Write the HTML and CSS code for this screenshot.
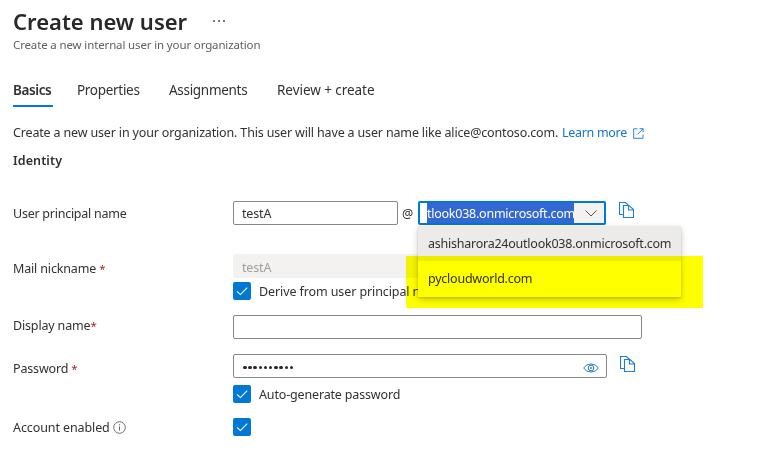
FILE: index.html
```html
<!DOCTYPE html>
<html lang="en">
<head>
<meta charset="utf-8">
<title>Create new user</title>
<link rel="stylesheet" href="styles.css">
</head>
<body>
<svg class="defs" width="0" height="0" aria-hidden="true">
  <symbol id="check" viewBox="0 0 18 18"><path d="M4 9.3l3.400 3.300 6.800-6.900" fill="none" stroke="#fff" stroke-width="1.1"/></symbol>
  <symbol id="copy" viewBox="0 0 16 17"><path d="M4.500 12.500h-4V.5h6l3 3M4.500 3.500h5.500l4.500 4v8h-10zM9.500 3.500v4.500h5" fill="none" stroke="#1a7fd6" stroke-width="1.1"/></symbol>
</svg>
<main class="page">
  <header class="head">
    <h1 class="title">Create new user</h1>
    <span class="more"><i></i><i></i><i></i></span>
  </header>
  <p class="subtitle">Create a new internal user in your organization</p>
  <nav class="tabs">
    <a class="tab active">Basics</a>
    <a class="tab t2">Properties</a>
    <a class="tab t3">Assignments</a>
    <a class="tab t4">Review + create</a>
  </nav>
  <div class="intro">
    <span class="intro-text">Create a new user in your organization. This user will have a user name like alice@contoso.com.</span>
    <a class="learn">Learn more</a>
    <svg class="external" width="11" height="11" viewBox="0 0 11 11"><path d="M4.500.8H.700v9.500h9.300V6.500M6.500.7h3.600v3.600M10 .8L4.500 6.300" fill="none" stroke="#2d83d6"/></svg>
  </div>
  <h2 class="section">Identity</h2>
  <form class="form">
    <div class="row upn">
      <label class="label l-upn">User principal name</label>
      <div class="box name-box"><span>testA</span></div>
      <span class="at">@</span>
      <div class="combo">
        <div class="combo-value"><span>tlook038.onmicrosoft.com</span></div>
        <div class="combo-arrow"><svg width="12" height="7" viewBox="0 0 12 7"><path d="M.5.5L6 6 11.500.5" fill="none" stroke="#555"/></svg></div>
        <div class="menu">
          <div class="option selected"><span class="o1">ashisharora24outlook038.onmicrosoft.com</span></div>
          <div class="option"><span class="o2">pycloudworld.com</span></div>
        </div>
        <div class="marker"></div>
      </div>
      <svg class="copy" width="16" height="17"><use href="#copy"/></svg>
    </div>
    <div class="row mail">
      <label class="label l-mail">Mail nickname <b>*</b></label>
      <div class="box disabled"><span>testA</span></div>
    </div>
    <div class="row derive">
      <span class="check"><svg width="18" height="18"><use href="#check"/></svg></span>
      <span class="check-text d-text">Derive from user principal name</span>
    </div>
    <div class="row display">
      <label class="label l-display">Display name<b>*</b></label>
      <div class="box wide"></div>
    </div>
    <div class="row password">
      <label class="label l-pass">Password <b>*</b></label>
      <div class="box pass-box">
        <span class="dots"><i></i><i></i><i></i><i></i><i></i><i></i><i></i><i></i><i></i><i></i></span>
        <svg class="eye" width="16" height="10" viewBox="0 0 16 10"><path d="M.7 5Q3 1 8 1t7.300 4Q13 9 8 9T.7 5z" fill="none" stroke="#2878c8"/><circle cx="8" cy="5" r="2.800" fill="none" stroke="#2878c8"/><circle cx="8" cy="5" r=".9" fill="#2878c8"/></svg>
      </div>
      <svg class="copy low" width="16" height="17"><use href="#copy"/></svg>
    </div>
    <div class="row auto">
      <span class="check"><svg width="18" height="18"><use href="#check"/></svg></span>
      <span class="check-text a-text">Auto-generate password</span>
    </div>
    <div class="row enabled">
      <label class="label l-acc">Account enabled</label>
      <svg class="info" width="13" height="13" viewBox="0 0 13 13"><circle cx="6.500" cy="6.500" r="5.800" fill="none" stroke="#605e5c" stroke-width=".9"/><path d="M6.500 5.500v4M6.500 3.300v1.100" stroke="#605e5c"/></svg>
      <span class="check"><svg width="18" height="18"><use href="#check"/></svg></span>
    </div>
  </form>
</main>
</body>
</html>
```

FILE: styles.css
```css
* { box-sizing: border-box; }
body {
  margin: 0;
  background: #fff;
  color: #323130;
  font: 12.5px/18px "Noto Sans", "Open Sans", sans-serif;
  letter-spacing: -0.16px;
  white-space: nowrap;
}
.defs { position: absolute; }
.page { width: 760px; height: 464px; padding: 6px 0 0 13px; overflow: hidden; }
.head { display: flex; height: 30px; align-items: center; }
.title { margin: 0; width: 200px; font-size: 22px; line-height: 30px; font-weight: 600; letter-spacing: 0; color: #292827; }
.more { display: flex; gap: 3px; }
.more i { width: 2px; height: 2px; background: #777; }
.subtitle { margin: 0; height: 18px; font-size: 11.5px; color: #605e5c; letter-spacing: -0.14px; }
.tabs { display: flex; height: 27px; margin-top: 26px; font-size: 13.5px; line-height: 20px; letter-spacing: -0.3px; }
.tab { height: 27px; margin-right: 24px; }
.active { width: 40px; border-bottom: 2px solid #0078d4; font-weight: 600; letter-spacing: -0.4px; }
.t2 { width: 68px; }
.t3 { width: 84px; }
.t4 { letter-spacing: -0.05px; }
.intro { display: flex; height: 18px; margin-top: 17px; align-items: center; line-height: 20px; }
.intro-text { width: 549px; }
.learn { width: 71px; color: #1374ce; letter-spacing: -0.3px; }
.section { margin: 10px 0 0; height: 18px; font-size: 12.5px; line-height: 18px; font-weight: 600; letter-spacing: 0.1px; }
.form { margin-top: 31px; }
.row { display: flex; align-items: center; height: 24px; }
.label { width: 220px; flex: none; padding-top: 1px; }
.label b { font-weight: 400; font-size: 11.5px; color: #a4262c; }
.l-upn { letter-spacing: -0.25px; }
.l-mail, .l-pass { padding-top: 6px; }
.l-display { padding: 0 0 3px; }
.box { display: flex; align-items: center; flex: none; height: 24px; border: 1px solid #8a8886; border-radius: 2px; padding: 1px 0 0 8px; }
.name-box { width: 165px; }
.at { width: 20px; padding: 1px 0 0 4px; }
.combo { position: relative; display: flex; width: 188px; height: 24px; border: 2px solid #0078d4; border-radius: 2px; padding-left: 7px; }
.combo-value { width: 147px; height: 20px; background: #3367d1; color: #fff; line-height: 21px; letter-spacing: -0.25px; overflow: hidden; }
.combo-arrow { display: flex; flex: 1; align-items: center; justify-content: center; padding-left: 3px; background: #f3f2f1; }
.menu { position: absolute; z-index: 1; left: -2px; top: 23px; width: 263px; height: 71px; background: #fff; letter-spacing: -0.24px; box-shadow: 0 3px 7px rgba(0,0,0,.2), 0 1px 2px rgba(0,0,0,.15); }
.option { display: flex; align-items: center; height: 35px; padding: 1px 0 0 10px; }
.selected { background: #edebe9; }
.marker { position: absolute; z-index: 2; left: -14px; top: 53px; width: 297px; height: 52px; background: #ff0; mix-blend-mode: multiply; }
.copy { margin: -6px 0 0 13px; }
.low { margin-top: -3px; }
.mail { margin-top: 29px; }
.disabled { width: 409px; padding-top: 3px; border-color: #f3f2f1; background: #f3f2f1; color: #a19f9d; }
.derive, .auto { height: 18px; padding-left: 220px; }
.derive { margin-top: 4px; }
.check { display: flex; width: 18px; height: 18px; border-radius: 2px; background: #0078d4; }
.check-text { margin-left: 8px; padding-top: 2px; }
.d-text { letter-spacing: -0.1px; }
.display { margin-top: 15px; }
.wide { width: 409px; }
.password { margin-top: 15px; }
.pass-box { width: 374px; justify-content: space-between; padding-right: 7px; }
.dots { display: flex; gap: 1.700px; padding: 2px 0 0 1px; }
.dots i { width: 3.500px; height: 3.500px; border-radius: 50%; background: #292827; }
.eye { margin-top: 2px; }
.auto { margin-top: 7px; }
.enabled { height: 18px; margin-top: 15px; }
.l-acc { width: 100px; letter-spacing: -0.1px; }
.info { margin-right: 107px; }
```
